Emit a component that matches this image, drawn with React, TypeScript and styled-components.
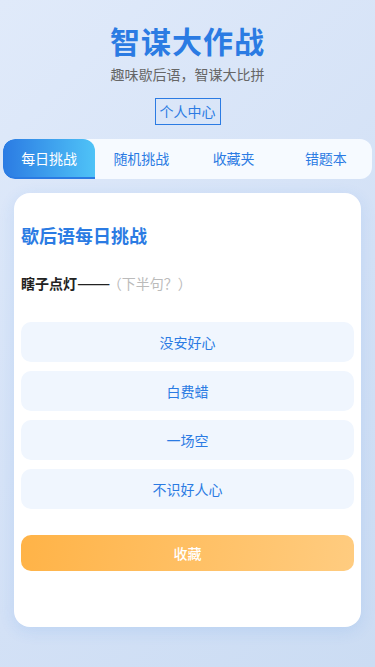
import React, { useState } from "react"
import styled, { createGlobalStyle } from "styled-components"

const GlobalStyle = createGlobalStyle`
  html, body {
    margin: 0;
    padding: 0;
  }
  body {
    font-family: "Noto Sans CJK SC", "Noto Sans", sans-serif;
    background: linear-gradient(135deg, #e0eafa 0%, #d3e1f6 60%, #cbdcf3 100%);
    min-height: 667px;
  }
`

const Page = styled.div`
  width: 375px;
  min-height: 667px;
  display: flex;
  flex-direction: column;
  align-items: center;
  box-sizing: border-box;
  padding-top: 20px;
`

const Title = styled.h1`
  margin: 0;
  font-size: 30px;
  line-height: 40px;
  font-weight: 700;
  color: #2b7be3;
  letter-spacing: 1px;
`

const Subtitle = styled.p`
  margin: 4px 0 0;
  font-size: 14px;
  line-height: 20px;
  color: #666;
`

const ProfileButton = styled.button`
  margin-top: 14px;
  height: 27px;
  padding: 0 4px;
  border: 1px solid #2b7be3;
  background: transparent;
  color: #2b7be3;
  font-family: inherit;
  font-size: 14px;
  line-height: 25px;
  cursor: pointer;
`

const Tabs = styled.nav`
  margin-top: 14px;
  width: 369px;
  height: 40px;
  display: grid;
  grid-template-columns: repeat(4, 1fr);
  background: #f6faff;
  border-radius: 12px;
  overflow: hidden;
`

const Tab = styled.button<{ $active: boolean }>`
  border: none;
  font-family: inherit;
  font-size: 14px;
  cursor: pointer;
  padding: 0;
  color: ${(p) => (p.$active ? "#fff" : "#2b7be3")};
  background: ${(p) =>
    p.$active ? "linear-gradient(90deg, #2b7be3 0%, #4fc3f7 100%)" : "transparent"};
  border-radius: ${(p) => (p.$active ? "12px 12px 0 12px" : "0")};
  border-bottom: 2px solid ${(p) => (p.$active ? "#2b7be3" : "transparent")};
`

const Card = styled.section`
  margin-top: 14px;
  width: 347px;
  height: 434px;
  box-sizing: border-box;
  background: #fff;
  border-radius: 16px;
  box-shadow: 0 4px 16px rgba(43, 123, 227, 0.12);
  padding: 30px 7px 0;
  display: flex;
  flex-direction: column;
`

const CardTitle = styled.h2`
  margin: 0;
  font-size: 18px;
  line-height: 24px;
  font-weight: 700;
  color: #2b7be3;
`

const Question = styled.p`
  margin: 26px 0 0;
  font-size: 14px;
  line-height: 20px;
  font-weight: 700;
  color: #222;
`

const Dash = styled.span`
  letter-spacing: -1px;
  transform: scaleX(1.4);
  display: inline-block;
  transform-origin: left center;
  margin-right: 8px;
`

const Hint = styled.span`
  font-weight: 400;
  color: #bbb;
`

const Options = styled.div`
  margin-top: 29px;
  display: flex;
  flex-direction: column;
  gap: 9px;
`

const Option = styled.button`
  height: 40px;
  border: none;
  border-radius: 10px;
  background: #f0f6fe;
  color: #2b7be3;
  font-family: inherit;
  font-size: 14px;
  cursor: pointer;
`

const Favorite = styled.button`
  margin-top: 26px;
  height: 36px;
  border: none;
  border-radius: 10px;
  background: linear-gradient(100deg, #ffb347 0%, #ffcc80 100%);
  color: #fff;
  font-family: inherit;
  font-size: 14px;
  font-weight: 500;
  cursor: pointer;
`

const tabs = ["每日挑战", "随机挑战", "收藏夹", "错题本"]
const options = ["没安好心", "白费蜡", "一场空", "不识好人心"]

export default function App() {
  const [active, setActive] = useState(0)

  return (
    <>
      <GlobalStyle />
      <Page>
        <Title>智谋大作战</Title>
        <Subtitle>趣味歇后语，智谋大比拼</Subtitle>
        <ProfileButton>个人中心</ProfileButton>
        <Tabs>
          {tabs.map((t, i) => (
            <Tab key={t} $active={i === active} onClick={() => setActive(i)}>
              {t}
            </Tab>
          ))}
        </Tabs>
        <Card>
          <CardTitle>歇后语每日挑战</CardTitle>
          <Question>
            瞎子点灯<Dash>——</Dash>
            <Hint>（下半句？）</Hint>
          </Question>
          <Options>
            {options.map((o) => (
              <Option key={o}>{o}</Option>
            ))}
          </Options>
          <Favorite>收藏</Favorite>
        </Card>
      </Page>
    </>
  )
}
